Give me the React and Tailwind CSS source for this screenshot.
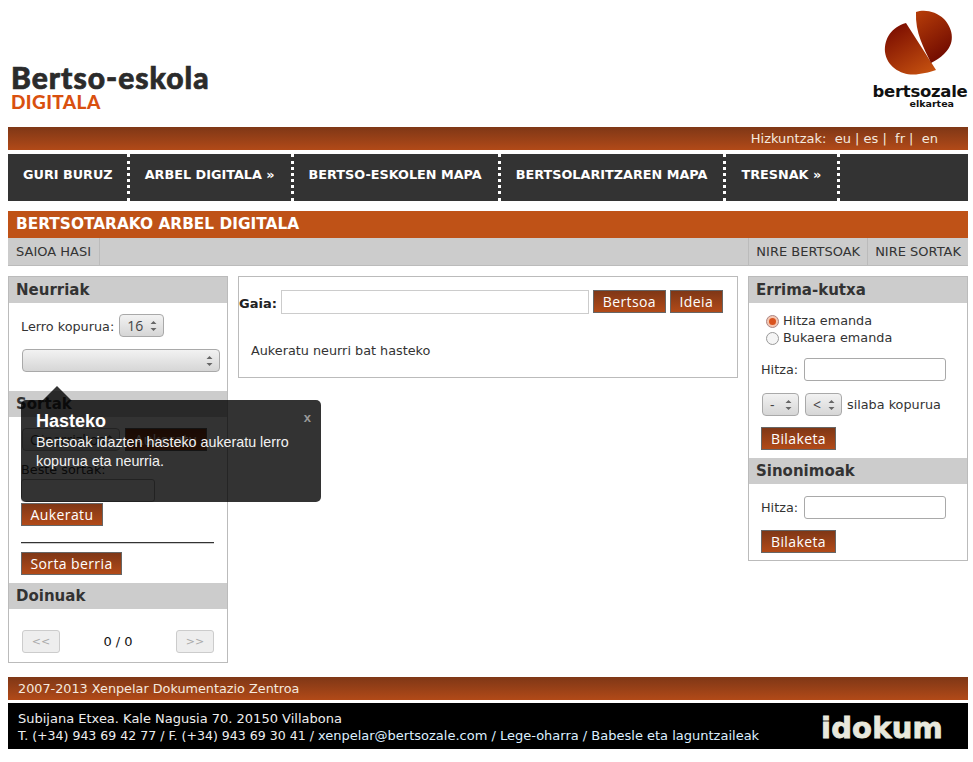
import React from 'react';

const Spin = () => (
    <svg width="7" height="12" viewBox="0 0 7 12" className="shrink-0">
        <path d="M3.5 1 L6.5 4 H0.5 Z M3.5 11 L6.5 8 H0.5 Z" fill="#666" />
    </svg>
);

const Select = ({ value, className }) => (
    <div className={`flex items-center justify-between h-[23px] pl-[7px] pr-[6px] rounded-[4px] border border-[#a9a9a9] bg-gradient-to-b from-[#f2f2f2] to-[#d6d6d6] text-[14px] text-[#444] font-["Open_Sans",sans-serif] ${className}`}>
        <span>{value}</span>
        <Spin />
    </div>
);

const Btn = ({ children, className = '' }) => (
    <button className={`block h-[23px] border border-[#666] bg-gradient-to-b from-[#7f3716] to-[#b24a18] text-white text-[14px] leading-none tracking-[0.4px] whitespace-nowrap font-["Open_Sans",sans-serif] ${className}`}>
        {children}
    </button>
);

const PanelTitle = ({ children }) => (
    <h3 className="h-[26px] bg-[#cccccc] pl-[7px] text-[15px] leading-[26px] font-bold text-[#333]">{children}</h3>
);

const TextInput = ({ className }) => (
    <div className={`h-[23px] rounded-[3px] border border-[#a9a9a9] bg-white ${className}`} />
);

const Bar = ({ children, className = '' }) => (
    <div className={`h-[23px] bg-gradient-to-b from-[#7f3716] to-[#b24a18] leading-[23px] text-[#f5e9df] ${className}`}>
        {children}
    </div>
);

const Radio = ({ checked }) => (
    <span className={`w-[13px] h-[13px] mt-[2px] rounded-full border flex items-center justify-center shrink-0 ${checked ? 'border-[#a88] bg-[#f5c7b2]' : 'border-[#999] bg-[#f5f5f5]'}`}>
        {checked && <span className="w-[7px] h-[7px] rounded-full bg-[#d9531e]" />}
    </span>
);

const Logo = () => (
    <div className="w-[96px] flex flex-col">
        <svg width="76" height="72" viewBox="0 0 76 72" className="ml-[8px]">
            <defs>
                <linearGradient id="lg1" x1="0.2" y1="0" x2="0.8" y2="1">
                    <stop offset="0" stopColor="#7a0c00" />
                    <stop offset="1" stopColor="#c4500f" />
                </linearGradient>
                <linearGradient id="lg2" x1="0.2" y1="0" x2="0.7" y2="1">
                    <stop offset="0" stopColor="#b23a08" />
                    <stop offset="1" stopColor="#6d0800" />
                </linearGradient>
            </defs>
            <path d="M26 15 C12 19 4 30 5 44 C7 60 24 69 39 66 C45 65 51 64 56 62 Z" fill="url(#lg1)" />
            <path d="M36 4 C44 1 56 3 64 11 C74 22 75 36 64 46 C60 50 56 52 51 55 C44 40 35 25 36 4 Z" fill="url(#lg2)" />
        </svg>
        <div className='mt-[4px] text-center text-[16.5px] leading-[16px] font-bold text-[#111] tracking-[-0.3px]'>bertsozale</div>
        <div className='self-end mr-[14px] text-[9.5px] leading-[8px] font-bold text-[#111]'>elkartea</div>
    </div>
);

const App = () => {
    const menu = ['GURI BURUZ', 'ARBEL DIGITALA »', 'BERTSO-ESKOLEN MAPA', 'BERTSOLARITZAREN MAPA', 'TRESNAK »'];

    return (
        <div className='w-[973px] h-[762px] bg-white pl-2 pr-[5px] text-[12.8px] text-[#333] overflow-hidden font-["DejaVu_Sans",sans-serif]'>
            {/* Header */}
            <div className="h-[127px] flex justify-between">
                <div className='pl-[3px] pt-[62px] font-["Lato",sans-serif] font-black'>
                    <div className="text-[30px] leading-[30px] tracking-[1px] text-[#2b2b2b] [-webkit-text-stroke:0.7px_#2b2b2b]">Bertso-eskola</div>
                    <div className="text-[19px] leading-[20px] tracking-[0.4px] text-[#d9500f]">DIGITALA</div>
                </div>
                <div className="mt-[8px]"><Logo /></div>
            </div>

            <Bar className="flex justify-end pr-[30px] whitespace-pre text-[13px]">
                Hizkuntzak:  eu | es |  fr |  en
            </Bar>

            <nav className="mt-[4px] h-[47px] bg-[#333333] flex items-stretch">
                {menu.map((m, i) => (
                    <div key={m} className={`flex items-center pb-[6px] pl-[15px] border-r-[3px] border-dotted border-white text-white font-bold text-[12.8px] whitespace-nowrap ${i === 0 ? 'pr-[14px]' : 'pr-[16px]'}`}>
                        {m}
                    </div>
                ))}
            </nav>

            <div className="mt-[10px] h-[27px] bg-[#bf5217] pl-[8px] text-[15.36px] leading-[27px] font-bold text-white">
                BERTSOTARAKO ARBEL DIGITALA
            </div>
            <div className="h-[28px] bg-[#cccccc] flex justify-between text-[13px] leading-[27px] border-b border-[#bbb]">
                <div className="px-[8px] border-r border-[#bbb]">SAIOA HASI</div>
                <div className="flex">
                    <div className="px-[7px] border-l border-[#bbb]">NIRE BERTSOAK</div>
                    <div className="px-[7px] border-l border-[#bbb]">NIRE SORTAK</div>
                </div>
            </div>

            {/* Columns */}
            <div className="mt-[10px] flex items-start gap-[10px]">
                {/* Left */}
                <aside className="relative w-[220px] h-[387px] border border-[#bbb]">
                    <PanelTitle>Neurriak</PanelTitle>
                    <div className="px-[12px] pt-[11px] h-[88px]">
                        <div className="flex items-center gap-[5px]">
                            <span className="mt-[2px]">Lerro kopurua:</span>
                            <Select value="16" className="w-[45px]" />
                        </div>
                        <Select value="" className="w-[198px] mt-[12px] ml-[1px]" />
                    </div>
                    <PanelTitle>Sortak</PanelTitle>
                    <div className="px-[12px] pt-[11px]">
                        <div className="flex gap-[5px]">
                            <Select value="Oinarrizkoa" className="w-[98px] ml-[1px]" />
                            <Btn className="w-[82px]">Aukeratu</Btn>
                        </div>
                        <div className="mt-[9px] leading-[19px]">Beste sortak:</div>
                        <TextInput className="w-[134px]" />
                        <Btn className="mt-[1px] w-[82px]">Aukeratu</Btn>
                        <div className="mt-[16px] w-[193px] h-[2px] border-t border-b border-t-[#333] border-b-[#ccc]" />
                        <Btn className="mt-[8px] w-[101px]">Sorta berria</Btn>
                    </div>
                    <div className="mt-[8px]">
                        <PanelTitle>Doinuak</PanelTitle>
                    </div>
                    <div className="mt-[21px] pl-[13px] pr-[13px] flex items-center justify-between">
                        <div className="w-[38px] h-[23px] rounded-[3px] border border-[#ccc] bg-[#eeeeee] text-[#aaa] text-[11px] text-center leading-[21px]">{'<<'}</div>
                        <span className="text-[#111] text-[13px]">0 / 0</span>
                        <div className="w-[38px] h-[23px] rounded-[3px] border border-[#ccc] bg-[#eeeeee] text-[#aaa] text-[11px] text-center leading-[21px]">{'>>'}</div>
                    </div>

                    {/* Tooltip */}
                    <div className="absolute left-[12px] top-[123px] w-[300px] h-[102px] rounded-[5px] bg-black/80 text-white font-['Liberation_Sans',sans-serif] px-[15px] pt-[11px]">
                        <div className="absolute left-[22px] -top-[14px] w-0 h-0 border-x-[14px] border-b-[14px] border-x-transparent border-b-black/80" />
                        <span className="absolute right-[10px] top-[8px] text-[13px] font-bold text-[#999]">x</span>
                        <div className="text-[18px] leading-[20px] font-bold">Hasteko</div>
                        <div className="mt-[2px] text-[14.3px] leading-[19px] text-[#f2f2f2]">
                            Bertsoak idazten hasteko aukeratu lerro kopurua eta neurria.
                        </div>
                    </div>
                </aside>

                {/* Middle */}
                <main className="w-[500px] h-[102px] border border-[#bbb]">
                    <div className="mt-[13px] flex items-start">
                        <b className="text-[13px] leading-[28px] text-[#222]">Gaia:</b>
                        <div className="ml-[4px] w-[308px] h-[24px] border border-[#ccc]" />
                        <Btn className="ml-[4px] w-[73px]">Bertsoa</Btn>
                        <Btn className="ml-[4px] w-[53px]">Ideia</Btn>
                    </div>
                    <p className="mt-[23px] ml-[12px]">Aukeratu neurri bat hasteko</p>
                </main>

                {/* Right */}
                <aside className="w-[220px] h-[285px] border border-[#bbb]">
                    <PanelTitle>Errima-kutxa</PanelTitle>
                    <div className="h-[155px] px-[12px]">
                        <div className="pl-[5px] pt-[9px] leading-[17px]">
                            <label className="flex items-center gap-[4px]"><Radio checked />Hitza emanda</label>
                            <label className="flex items-center gap-[4px]"><Radio />Bukaera emanda</label>
                        </div>
                        <div className="mt-[12px] flex items-center gap-[6px]">
                            <span>Hitza:</span>
                            <TextInput className="w-[142px]" />
                        </div>
                        <div className="mt-[12px] flex items-center">
                            <Select value="-" className="w-[37px] ml-[1px]" />
                            <Select value="<" className="w-[37px] ml-[6px]" />
                            <span className="ml-[5px]">silaba kopurua</span>
                        </div>
                        <Btn className="mt-[11px] w-[75px]">Bilaketa</Btn>
                    </div>
                    <PanelTitle>Sinonimoak</PanelTitle>
                    <div className="px-[12px]">
                        <div className="mt-[12px] flex items-center gap-[6px]">
                            <span>Hitza:</span>
                            <TextInput className="w-[142px]" />
                        </div>
                        <Btn className="mt-[11px] w-[75px]">Bilaketa</Btn>
                    </div>
                </aside>
            </div>

            {/* Footer */}
            <Bar className="mt-[14px] pl-[10px]">2007-2013 Xenpelar Dokumentazio Zentroa</Bar>
            <footer className="mt-[3px] h-[46px] bg-black flex justify-between pl-[10px] pr-[25px] leading-[17px] text-[#eee]">
                <div className="pt-[7px] whitespace-nowrap">
                    <div className="text-[13px]">Subijana Etxea. Kale Nagusia 70. 20150 Villabona</div>
                    <div>
                        <span className="text-[12.55px]">T. (+34) 943 69 42 77 / F. (+34) 943 69 30 41 / </span>
                        <span className="text-[13px] text-[#dcefff]">xenpelar@bertsozale.com / Lege-oharra / Babesle eta laguntzaileak</span>
                    </div>
                </div>
                <div className="text-[29px] leading-[50px] font-bold text-[#e8e8dc] tracking-[0.2px] [-webkit-text-stroke:0.8px_#e8e8dc]">idokum</div>
            </footer>
        </div>
    );
};

export default App;
